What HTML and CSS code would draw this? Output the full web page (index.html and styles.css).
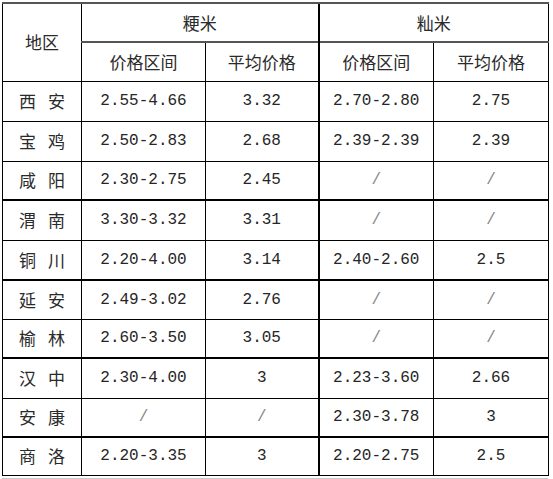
FILE: index.html
```html
<!DOCTYPE html>
<html lang="zh">
<head>
<meta charset="utf-8">
<link rel="stylesheet" href="styles.css">
<title>价格表</title>
</head>
<body>
<div class="wrap">
<table class="price">
  <colgroup>
    <col class="c1"><col class="c2"><col class="c3"><col class="c4"><col class="c5">
  </colgroup>
  <thead>
    <tr class="h1">
      <th rowspan="2" class="head-region">地区</th>
      <th colspan="2" class="grp">粳米</th>
      <th colspan="2" class="grp thickl">籼米</th>
    </tr>
    <tr class="h2">
      <th>价格区间</th>
      <th>平均价格</th>
      <th class="thickl">价格区间</th>
      <th>平均价格</th>
    </tr>
  </thead>
  <tbody>
    <tr class="r40"><td class="region">西 安</td><td class="num">2.55-4.66</td><td class="num">3.32</td><td class="num thickl">2.70-2.80</td><td class="num">2.75</td></tr>
    <tr class="r40"><td class="region">宝 鸡</td><td class="num">2.50-2.83</td><td class="num">2.68</td><td class="num thickl">2.39-2.39</td><td class="num">2.39</td></tr>
    <tr class="r39"><td class="region">咸 阳</td><td class="num">2.30-2.75</td><td class="num">2.45</td><td class="na thickl">/</td><td class="na">/</td></tr>
    <tr class="r40 tt"><td class="region">渭 南</td><td class="num">3.30-3.32</td><td class="num">3.31</td><td class="na thickl">/</td><td class="na">/</td></tr>
    <tr class="r40"><td class="region">铜 川</td><td class="num">2.20-4.00</td><td class="num">3.14</td><td class="num thickl">2.40-2.60</td><td class="num">2.5</td></tr>
    <tr class="r39 tt"><td class="region">延 安</td><td class="num">2.49-3.02</td><td class="num">2.76</td><td class="na thickl">/</td><td class="na">/</td></tr>
    <tr class="r39"><td class="region">榆 林</td><td class="num">2.60-3.50</td><td class="num">3.05</td><td class="na thickl">/</td><td class="na">/</td></tr>
    <tr class="r40 tt"><td class="region">汉 中</td><td class="num">2.30-4.00</td><td class="num">3</td><td class="num thickl">2.23-3.60</td><td class="num">2.66</td></tr>
    <tr class="r39"><td class="region">安 康</td><td class="na">/</td><td class="na">/</td><td class="num thickl">2.30-3.78</td><td class="num">3</td></tr>
    <tr class="r38 tt"><td class="region">商 洛</td><td class="num">2.20-3.35</td><td class="num">3</td><td class="num thickl">2.20-2.75</td><td class="num">2.5</td></tr>
  </tbody>
</table>
<div class="foot"></div>
</div>
</body>
</html>
```

FILE: styles.css
```css
html, body {
  margin: 0;
  padding: 0;
  background: #fff;
}
.wrap {
  padding: 2px 0 0 2px;
  width: 547px;
}
.price {
  border-collapse: collapse;
  table-layout: fixed;
  width: 546px;
  color: #2a2a2a;
  font-family: "Noto Sans CJK SC", "Liberation Sans", sans-serif;
  font-size: 17px;
  font-weight: 400;
}
.c1 { width: 79px; }
.c2 { width: 124px; }
.c3 { width: 113px; }
.c4 { width: 115px; }
.c5 { width: 115px; }
.price th, .price td {
  border: 1px solid #000;
  padding: 0;
  text-align: center;
  vertical-align: middle;
  font-weight: 400;
  line-height: 20px;
}
.price thead th { border-top: 2px solid #555; }
.h1 { height: 39px; }
.h2 { height: 39px; }
.h2 th { border-top: 2px solid #000; }
.price th.grp { border-top: 2px solid #555; }
.r40 { height: 40px; }
.r39 { height: 39px; }
.r38 { height: 38px; }
.tt td { border-top: 2px solid #000; }
.price .thickl { border-left: 2px solid #000; }
.region {
  word-spacing: 8px;
}
.num {
  font-family: "Liberation Mono", "DejaVu Sans Mono", monospace;
  font-size: 16px;
  color: #262626;
}
.na {
  font-family: "Liberation Mono", monospace;
  font-size: 16px;
  color: #888;
}
.foot {
  margin-top: 2px;
  width: 546px;
  height: 0;
  border-top: 1px solid #c8c8c8;
}
```
